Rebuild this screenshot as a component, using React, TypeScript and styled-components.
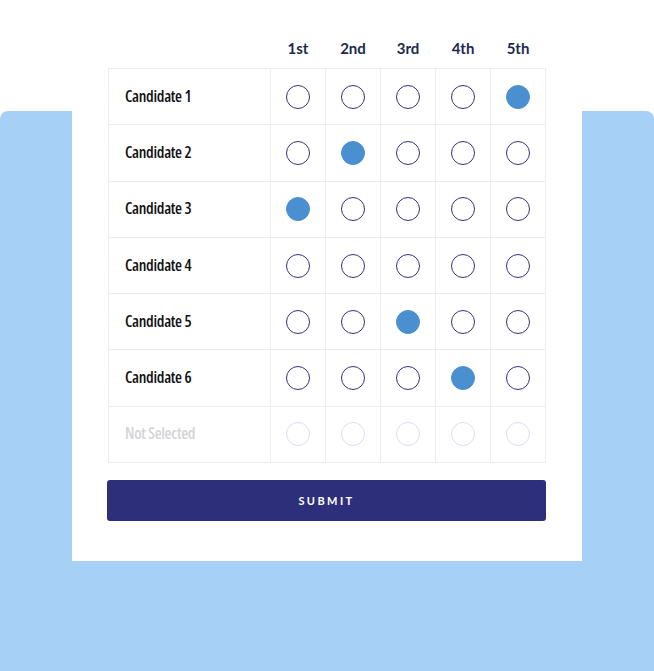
import * as React from "react";
import styled, { createGlobalStyle } from "styled-components";

const GlobalStyle = createGlobalStyle`
  html, body {
    margin: 0;
    padding: 0;
    background: #ffffff;
  }
  * {
    box-sizing: border-box;
  }
`;

// pick = index of the chosen rank, -1 for none
const candidates = [
  { name: "Candidate 1", pick: 4 },
  { name: "Candidate 2", pick: 1 },
  { name: "Candidate 3", pick: 0 },
  { name: "Candidate 4", pick: -1 },
  { name: "Candidate 5", pick: 2 },
  { name: "Candidate 6", pick: 3 },
];

const ranks = ["1st", "2nd", "3rd", "4th", "5th"];

export default function App() {
  return (
    <Page>
      <GlobalStyle />
      <Backdrop>
        <Card>
          <HeaderRow>
            <span />
            {ranks.map(r => (
              <RankLabel key={r}>{r}</RankLabel>
            ))}
          </HeaderRow>
          <Table>
            {candidates.map(c => (
              <React.Fragment key={c.name}>
                <NameCell>{c.name}</NameCell>
                {ranks.map((r, i) => (
                  <Cell key={r}>
                    <Radio $checked={c.pick === i} />
                  </Cell>
                ))}
              </React.Fragment>
            ))}
            <NameCell $muted>Not Selected</NameCell>
            {ranks.map(r => (
              <Cell key={r}>
                <Radio $muted />
              </Cell>
            ))}
          </Table>
          <SubmitButton>SUBMIT</SubmitButton>
        </Card>
      </Backdrop>
    </Page>
  );
}

const Page = styled.div`
  width: 654px;
  height: 671px;
  padding-top: 111px;
  overflow: hidden;
`;

const Backdrop = styled.div`
  display: flex;
  flex-direction: column;
  background: #a6d0f5;
  border-radius: 8px 8px 0 0;
  height: 560px;
  padding: 0 72px;
`;

const Card = styled.div`
  margin-top: -111px;
  background: #ffffff;
  height: 561px;
  padding: 28px 36px 0;
`;

const HeaderRow = styled.div`
  display: grid;
  grid-template-columns: 162px repeat(5, 1fr);
  height: 40px;
  padding-right: 1px;
`;

const RankLabel = styled.div`
  display: flex;
  align-items: center;
  justify-content: center;
  padding-left: 1px;
  font-family: Lato, "Liberation Sans", sans-serif;
  font-weight: 700;
  font-size: 15px;
  color: #1b2a4e;
`;

const Table = styled.div`
  display: grid;
  grid-template-columns: 161px repeat(5, 1fr);
  grid-auto-rows: 55.3px;
  gap: 1px;
  border: 1px solid #ececf1;
  background: #ececf1;
  width: 438px;
`;

const NameCell = styled.div<{ $muted?: boolean }>`
  background: #ffffff;
  display: flex;
  align-items: center;
  padding: 0 0 2px 16px;
  font-family: "Open Sans", sans-serif;
  font-stretch: 75%;
  font-weight: 600;
  font-size: 16px;
  letter-spacing: -0.3px;
  color: ${p => (p.$muted ? "#d4d4d8" : "#111111")};
`;

const Cell = styled.div`
  background: #ffffff;
  display: flex;
  align-items: center;
  justify-content: center;
`;

const Radio = styled.span<{ $checked?: boolean; $muted?: boolean }>`
  width: 24px;
  height: 24px;
  border-radius: 50%;
  border: 1.5px solid
    ${p => (p.$checked ? "#4a90d0" : p.$muted ? "#e0dcf7" : "#33327a")};
  background: ${p => (p.$checked ? "#4a90d0" : "#ffffff")};
`;

const SubmitButton = styled.button`
  display: block;
  margin: 17px 0 0 -1px;
  width: 439px;
  height: 41px;
  border: none;
  border-radius: 3px;
  background: #2e2f7a;
  color: #ffffff;
  font-family: Lato, "Liberation Sans", sans-serif;
  font-weight: 700;
  font-size: 11px;
  letter-spacing: 2.4px;
  cursor: pointer;
`;
